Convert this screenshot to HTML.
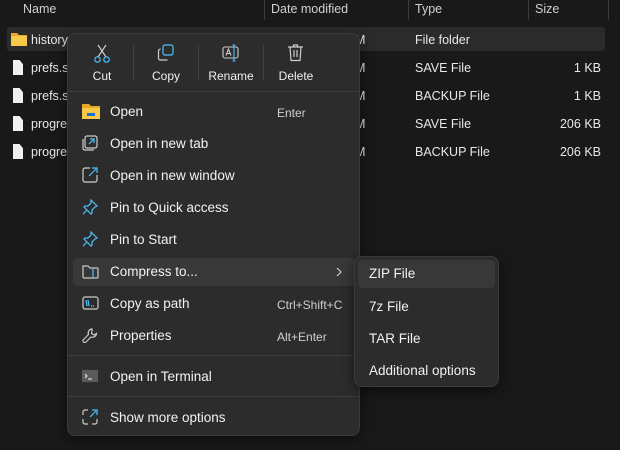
<!DOCTYPE html>
<html><head><style>
body{margin:0;width:620px;height:450px;background:#191919;font-family:"Liberation Sans",sans-serif;font-size:12.5px;color:#e8e8e8;position:relative;overflow:hidden}
.a{position:absolute;white-space:nowrap}
.hdr{color:#d0d0d0;top:2px}
.vs{position:absolute;top:0;width:1px;height:20px;background:#3c3c3c}
.fi{position:absolute;left:13px;width:10px;height:15px;background:#f0f0f0;clip-path:polygon(0 0,65% 0,100% 28%,100% 100%,0 100%)}
.menu{position:absolute;left:67px;top:33px;width:293px;height:403px;background:#2c2c2c;border:1px solid #3a3a3a;border-radius:8px;box-shadow:0 4px 14px rgba(0,0,0,.5);box-sizing:border-box}
.it{position:absolute;left:42px;color:#f2f2f2;font-size:13.5px}
.sc{position:absolute;left:209px;color:#cfcfcf;font-size:12px}
.ic{position:absolute;left:14px}
.tl{position:absolute;top:35px;font-size:12px;color:#f0f0f0;transform:translateX(-50%)}
.sub{position:absolute;left:354px;top:256px;width:145px;height:131px;background:#2c2c2c;border:1px solid #3a3a3a;border-radius:8px;box-sizing:border-box;box-shadow:0 4px 14px rgba(0,0,0,.5)}
.si{position:absolute;left:14px;font-size:13.5px;color:#f2f2f2}
</style></head><body>
<div class="a hdr" style="left:23px">Name</div>
<div class="vs" style="left:264px"></div>
<div class="a hdr" style="left:271px">Date modified</div>
<div class="vs" style="left:408px"></div>
<div class="a hdr" style="left:415px">Type</div>
<div class="vs" style="left:528px"></div>
<div class="a hdr" style="left:535px">Size</div>
<div class="vs" style="left:608px"></div>
<div style="position:absolute;left:7px;top:27px;width:598px;height:24px;background:#2b2b2b;border-radius:3px"></div>
<svg class="a" style="left:11px;top:32px" width="16" height="14"><path d="M0 1h6l2 2h8v11H0z" fill="#e8a82a"/><path d="M0 4h16v10H0z" fill="#f8c948"/></svg>
<div class="a" style="left:31px;top:33px">history</div>
<div class="fi" style="top:60px"></div><div class="a" style="left:31px;top:61px">prefs.sa</div>
<div class="fi" style="top:88px"></div><div class="a" style="left:31px;top:89px">prefs.sa</div>
<div class="fi" style="top:116px"></div><div class="a" style="left:31px;top:117px">progre</div>
<div class="fi" style="top:144px"></div><div class="a" style="left:31px;top:145px">progre</div>
<div class="a" style="left:355px;top:33px">M</div><div class="a" style="left:355px;top:61px">M</div><div class="a" style="left:355px;top:89px">M</div><div class="a" style="left:355px;top:117px">M</div><div class="a" style="left:355px;top:145px">M</div>
<div class="a" style="left:415px;top:33px">File folder</div>
<div class="a" style="left:415px;top:61px">SAVE File</div>
<div class="a" style="left:415px;top:89px">BACKUP File</div>
<div class="a" style="left:415px;top:117px">SAVE File</div>
<div class="a" style="left:415px;top:145px">BACKUP File</div>
<div class="a" style="right:19px;top:61px">1 KB</div>
<div class="a" style="right:19px;top:89px">1 KB</div>
<div class="a" style="right:19px;top:117px">206 KB</div>
<div class="a" style="right:19px;top:145px">206 KB</div>

<div class="menu">
<svg class="a" style="left:25px;top:10px" width="18" height="20" fill="none" stroke-width="1.2"><path d="M5 1l8 12M13 1L5 13" stroke="#ccc"/><circle cx="4.5" cy="15.5" r="2.7" stroke="#4cc2ff"/><circle cx="13.5" cy="15.5" r="2.7" stroke="#4cc2ff"/></svg>
<svg class="a" style="left:89px;top:10px" width="18" height="18" fill="none" stroke-width="1.2"><rect x="6" y="1" width="10" height="10" rx="2" stroke="#4cc2ff"/><path d="M3.5 5a2 2 0 0 0-2 2v7a2 2 0 0 0 2 2h7" stroke="#ccc"/></svg>
<svg class="a" style="left:154px;top:10px" width="18" height="18" fill="none" stroke-width="1.1"><rect x="1" y="3" width="15" height="11" rx="2" stroke="#ccc"/><path d="M4 11.5l2.5-6.5 2.5 6.5M5 9.5h3" stroke="#ccc"/><path d="M12 1v16M10.5 1h3M10.5 17h3" stroke="#4cc2ff"/></svg>
<svg class="a" style="left:219px;top:10px" width="18" height="18" fill="none" stroke="#ccc" stroke-width="1.2"><path d="M1 3h15M6.5 3V1h4v2M3 3l1 13.5h9l1-13.5M7 6v7M10 6v7"/></svg>
<div class="tl" style="left:34px">Cut</div>
<div class="tl" style="left:98px">Copy</div>
<div class="tl" style="left:163px">Rename</div>
<div class="tl" style="left:228px">Delete</div>
<div class="a" style="left:65px;top:11px;width:1px;height:36px;background:#404040"></div>
<div class="a" style="left:130px;top:11px;width:1px;height:36px;background:#404040"></div>
<div class="a" style="left:195px;top:11px;width:1px;height:36px;background:#404040"></div>
<div class="a" style="left:0;top:57px;width:291px;height:1px;background:#3d3d3d"></div>

<svg class="ic" style="top:69px" width="18" height="16"><path d="M0 1h7l2 2h9v13H0z" fill="#e8a82a"/><path d="M0 5h18v11H0z" fill="#f8c948"/><rect x="5" y="10" width="8" height="3" fill="#1a6fd0"/></svg>
<div class="it" style="top:70px">Open</div><div class="sc" style="top:72px">Enter</div>
<svg class="ic" style="top:101px" width="16" height="16" fill="none" stroke-width="1.2"><rect x="3" y="1" width="12" height="12" rx="2" stroke="#ccc"/><path d="M1 4v9a2 2 0 0 0 2 2h9" stroke="#ccc"/><path d="M7 9l5-5M8 4h4v4" stroke="#4cc2ff"/></svg>
<div class="it" style="top:102px">Open in new tab</div>
<svg class="ic" style="top:133px" width="16" height="16" fill="none" stroke-width="1.2"><path d="M8 1H3a2 2 0 0 0-2 2v10a2 2 0 0 0 2 2h10a2 2 0 0 0 2-2V8" stroke="#ccc"/><path d="M7 9l7-7M10 1h5v5" stroke="#4cc2ff"/></svg>
<div class="it" style="top:134px">Open in new window</div>
<svg class="ic" style="top:165px" width="16" height="16" fill="none" stroke="#4cc2ff" stroke-width="1.2"><path d="M9 1l6 6-2 1-3 3v3l-1 1-7-7 1-1h3l3-3z"/><path d="M4.5 11.5L1 15"/></svg>
<div class="it" style="top:166px">Pin to Quick access</div>
<svg class="ic" style="top:197px" width="16" height="16" fill="none" stroke="#4cc2ff" stroke-width="1.2"><path d="M9 1l6 6-2 1-3 3v3l-1 1-7-7 1-1h3l3-3z"/><path d="M4.5 11.5L1 15"/></svg>
<div class="it" style="top:198px">Pin to Start</div>
<div class="a" style="left:5px;top:224px;width:282px;height:28px;background:#383838;border-radius:4px"></div>
<svg class="ic" style="top:230px" width="17" height="15" fill="none" stroke-width="1.2"><path d="M1 2h5l2 2h7a1 1 0 0 1 1 1v8a1 1 0 0 1-1 1H2a1 1 0 0 1-1-1z" stroke="#ccc"/><path d="M11 4v10" stroke="#4cc2ff"/></svg>
<div class="it" style="top:230px">Compress to...</div>
<svg class="a" style="left:268px;top:233px" width="6" height="10" fill="none" stroke="#ccc" stroke-width="1.2"><path d="M1 1l4 4-4 4"/></svg>
<svg class="ic" style="top:262px" width="17" height="14" fill="none" stroke-width="1.2"><rect x="1" y="1" width="15" height="12" rx="2" stroke="#ccc"/><path d="M4 4l1 6M6 4l1 6" stroke="#4cc2ff"/><path d="M9 10h1M11 10h1" stroke="#ccc"/></svg>
<div class="it" style="top:262px">Copy as path</div><div class="sc" style="top:264px">Ctrl+Shift+C</div>
<svg class="ic" style="top:294px" width="16" height="16" fill="none" stroke="#ccc" stroke-width="1.2"><path d="M10 1a4 4 0 0 0-3.5 5.5L1.5 11.5a1.5 1.5 0 0 0 2.5 2.5l5-5A4 4 0 0 0 14.5 5.5L12 7 9.5 5.5 10 3z"/></svg>
<div class="it" style="top:294px">Properties</div><div class="sc" style="top:296px">Alt+Enter</div>
<div class="a" style="left:0;top:321px;width:291px;height:1px;background:#3d3d3d"></div>
<svg class="ic" style="top:336px" width="16" height="12"><rect width="16" height="12" fill="#5a5a5a"/><path d="M3 4l2 2-2 2" stroke="#eee" fill="none"/><path d="M6 9h4" stroke="#eee"/></svg>
<div class="it" style="top:335px">Open in Terminal</div>
<div class="a" style="left:0;top:362px;width:291px;height:1px;background:#3d3d3d"></div>
<svg class="ic" style="top:375px" width="16" height="16" fill="none" stroke-width="1.2"><path d="M6 1H3a2 2 0 0 0-2 2v3M1 10v3a2 2 0 0 0 2 2h3M10 15h3a2 2 0 0 0 2-2v-3" stroke="#ccc"/><path d="M8 8l6-6M10 1h5v5" stroke="#4cc2ff"/></svg>
<div class="it" style="top:376px">Show more options</div>
</div>

<div class="sub">
<div class="a" style="left:3px;top:3px;width:137px;height:28px;background:#383838;border-radius:4px"></div>
<div class="si" style="top:9px">ZIP File</div>
<div class="si" style="top:42px">7z File</div>
<div class="si" style="top:74px">TAR File</div>
<div class="si" style="top:106px">Additional options</div>
</div>
</body></html>
